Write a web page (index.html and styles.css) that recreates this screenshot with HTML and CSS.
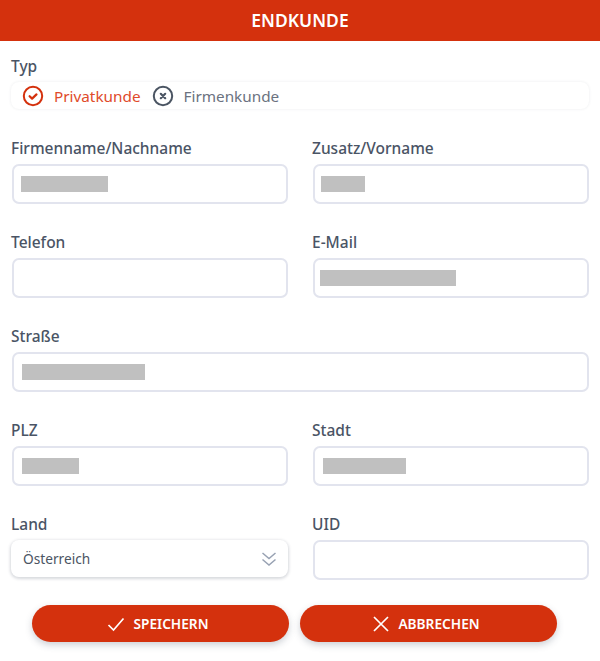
FILE: index.html
```html
<!DOCTYPE html>
<html lang="de">
<head>
<meta charset="utf-8">
<title>Endkunde</title>
<link rel="stylesheet" href="styles.css">
</head>
<body>
<header class="title">ENDKUNDE</header>
<main class="form">
  <section class="typ">
    <div class="label">Typ</div>
    <div class="radios">
      <span class="radio active">
        <svg class="radio-icon" viewBox="0 0 22 22"><circle cx="11" cy="11" r="9.2"/><path class="mark" d="M7.6 11.200l2.500 2.400 4.400-4.200"/></svg>
        Privatkunde
      </span>
      <span class="radio">
        <svg class="radio-icon" viewBox="0 0 22 22"><circle cx="11" cy="11" r="9.2"/><path class="mark" d="M8.800 8.800l4.400 4.400M13.200 8.800l-4.400 4.400"/></svg>
        Firmenkunde
      </span>
    </div>
  </section>
  <section class="fields">
    <div class="field">
      <div class="label">Firmenname/Nachname</div>
      <div class="input pad-7"><span class="blur" style="width:87px"></span></div>
    </div>
    <div class="field">
      <div class="label">Zusatz/Vorname</div>
      <div class="input pad-6"><span class="blur" style="width:44px"></span></div>
    </div>
    <div class="field">
      <div class="label">Telefon</div>
      <div class="input"></div>
    </div>
    <div class="field">
      <div class="label">E-Mail</div>
      <div class="input pad-5"><span class="blur" style="width:136px"></span></div>
    </div>
    <div class="field wide">
      <div class="label">Straße</div>
      <div class="input pad-8"><span class="blur" style="width:123px"></span></div>
    </div>
    <div class="field">
      <div class="label">PLZ</div>
      <div class="input pad-8"><span class="blur" style="width:57px"></span></div>
    </div>
    <div class="field">
      <div class="label">Stadt</div>
      <div class="input pad-8"><span class="blur" style="width:83px"></span></div>
    </div>
    <div class="field">
      <div class="label">Land</div>
      <div class="select">
        <span>Österreich</span>
        <svg class="chevrons" viewBox="0 0 16 16"><path d="M1.500 2l6.500 5.500L14.500 2M1.500 8.500L8 14l6.500-5.500"/></svg>
      </div>
    </div>
    <div class="field">
      <div class="label">UID</div>
      <div class="input"></div>
    </div>
  </section>
  <div class="actions">
    <button class="btn" type="button">
      <svg class="btn-icon" viewBox="0 0 18 18"><path d="M1.500 10l5 5L16.500 3.500"/></svg>
      SPEICHERN
    </button>
    <button class="btn" type="button">
      <svg class="btn-icon" viewBox="0 0 18 18"><path d="M2 2l14 14M16 2L2 16"/></svg>
      ABBRECHEN
    </button>
  </div>
</main>
</body>
</html>
```
FILE: styles.css
```css
* { box-sizing: border-box; }
html, body { margin: 0; padding: 0; }
body {
  width: 600px;
  height: 661px;
  background: #fff;
  font-family: "Noto Sans", "Open Sans", sans-serif;
  color: #475162;
  overflow: hidden;
}
.title {
  height: 41px;
  background: #d4310d;
  color: #fff;
  font-size: 17.500px;
  font-weight: 600;
  line-height: 41px;
  text-align: center;
}
.form { padding: 0 11px; }
.label {
  height: 22px;
  font-size: 15.500px;
  font-weight: 500;
  line-height: 22px;
  color: #4a5465;
}
.typ { padding-top: 14px; }
.radios {
  display: flex;
  align-items: center;
  gap: 11px;
  height: 27px;
  padding-left: 11px;
  margin-top: 5px;
  border-radius: 8px;
  box-shadow: 0 0 3px rgba(60, 70, 90, 0.1);
  font-size: 15.300px;
}
.radio { display: flex; align-items: center; gap: 10px; color: #6b7280; }
.radio.active { color: #e04a2a; }
.radio-icon { width: 22px; height: 22px; fill: none; stroke: #4b5563; stroke-width: 2; stroke-linecap: round; stroke-linejoin: round; }
.radio-icon .mark { stroke-width: 2.200; }
.radio.active .radio-icon { stroke: #d4310d; }
.fields {
  display: grid;
  grid-template-columns: 276px 276px;
  column-gap: 25px;
  row-gap: 27px;
  margin-top: 28px;
  padding-left: 1px;
}
.field .label { margin-left: -1px; margin-bottom: 5px; }
.wide { grid-column: 1 / -1; }
.wide .input { width: 577px; }
.input {
  display: flex;
  align-items: center;
  height: 40px;
  background: #fff;
  border: 2px solid #e2e4ee;
  border-radius: 7px;
}
.pad-5 { padding-left: 4.500px; }
.pad-6 { padding-left: 5.500px; }
.pad-7 { padding-left: 6.500px; }
.pad-8 { padding-left: 7.500px; }
.blur { display: block; height: 16.500px; background: #c0c0c0; }
.select {
  display: flex;
  align-items: center;
  justify-content: space-between;
  width: 277px;
  height: 37px;
  margin-top: 1px;
  margin-left: -1px;
  padding: 0 11px 0 12px;
  border-radius: 8px;
  background: #fff;
  box-shadow: 0 1px 3px 1px rgba(60, 70, 90, 0.2);
  font-size: 13.700px;
  color: #4b5563;
}
.chevrons { width: 16px; height: 16px; fill: none; stroke: #98a2b3; stroke-width: 1.500; }
.actions {
  display: flex;
  gap: 11px;
  margin-top: 25px;
  padding-left: 21px;
}
.btn {
  display: flex;
  align-items: center;
  justify-content: center;
  gap: 8px;
  width: 257px;
  height: 37px;
  padding: 0 5px 0 0;
  border: 0;
  border-radius: 19px;
  background: #d4310d;
  color: #fff;
  font-family: inherit;
  font-size: 13.700px;
  font-weight: 600;
  box-shadow: 0 3px 7px rgba(60, 70, 90, 0.25);
}
.btn-icon { width: 18px; height: 18px; fill: none; stroke: #fff; stroke-width: 1.700; }
```
